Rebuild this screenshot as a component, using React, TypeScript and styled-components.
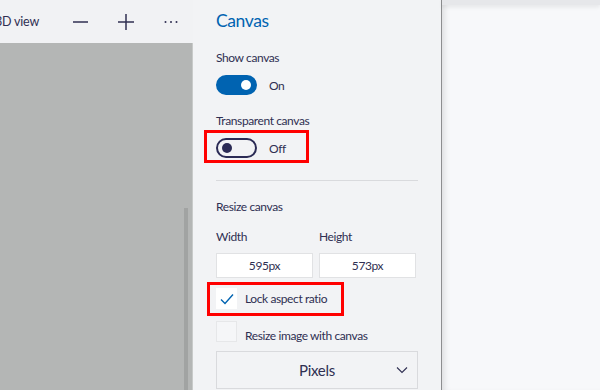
import React from "react";
import styled, { createGlobalStyle } from "styled-components";

const GlobalStyle = createGlobalStyle`
  html, body { margin: 0; padding: 0; background: #f7f8fa; }
  body { font-family: "Segoe UI", Lato, "Noto Sans", sans-serif; letter-spacing: -0.4px; }
  *, *::before, *::after { box-sizing: border-box; }
`;

const ink = "#2f2f52";

const Root = styled.div`
  display: flex;
  width: 600px;
  height: 390px;
  overflow: hidden;
`;

const LeftPane = styled.div`
  width: 193px;
  display: flex;
  flex-direction: column;
  overflow: hidden;
`;

const Toolbar = styled.div`
  height: 43px;
  background: #f1f2f4;
  display: flex;
  align-items: center;
  gap: 30px;
  color: ${ink};
`;

const ViewLabel = styled.span`
  font-size: 12.5px;
  letter-spacing: -0.2px;
  margin-left: -5px;
  width: 48px;
  flex: none;
  white-space: nowrap;
`;

const ToolIcon = styled.svg`
  flex: none;
  display: block;
`;

const CanvasArea = styled.div`
  flex: 1;
  background: #b4b6b5;
  position: relative;
  border-right: 1px solid #c8cac9;
`;

const ScrollThumb = styled.div`
  position: absolute;
  right: 4px;
  top: 165px;
  bottom: 0;
  width: 4px;
  background: #a1a3a2;
`;

const Panel = styled.div`
  width: 248px;
  background: #f2f3f5;
  padding: 10px 23px 0 23px;
  display: flex;
  flex-direction: column;
  color: ${ink};
`;

const Title = styled.h2`
  margin: 0;
  font-size: 17.5px;
  line-height: 22px;
  font-weight: 400;
  color: #0063b1;
`;

const Label = styled.div<{ $mt: number }>`
  margin-top: ${(p) => p.$mt}px;
  font-size: 12px;
  line-height: 16px;
  white-space: nowrap;
`;

const ToggleRow = styled.div<{ $mt: number; $marked?: boolean }>`
  position: relative;
  margin-top: ${(p) => p.$mt}px;
  display: flex;
  align-items: center;
  gap: 12px;
  height: 20px;
  font-size: 12px;
  ${(p) =>
    p.$marked
      ? `&::after {
    content: "";
    position: absolute;
    left: -12px;
    top: -8px;
    width: 105px;
    height: 33px;
    border: 3px solid #ff0000;
  }`
      : ""}
`;

const Switch = styled.div<{ $on: boolean }>`
  position: relative;
  width: 41px;
  height: 20px;
  border-radius: 10px;
  background: ${(p) => (p.$on ? "#0063b1" : "transparent")};
  border: 2px solid ${(p) => (p.$on ? "#0063b1" : "#2b2b55")};
  flex: none;
  &::after {
    content: "";
    position: absolute;
    top: 3px;
    ${(p) => (p.$on ? "right: 4px;" : "left: 4px;")}
    width: 10px;
    height: 10px;
    border-radius: 50%;
    background: ${(p) => (p.$on ? "#ffffff" : "#2b2b55")};
  }
`;

const Separator = styled.div`
  margin-top: 22px;
  height: 1px;
  background: #d9dadd;
`;

const FieldGrid = styled.div<{ $mt: number }>`
  margin-top: ${(p) => p.$mt}px;
  display: grid;
  grid-template-columns: 97px 97px;
  column-gap: 6px;
  font-size: 12px;
  line-height: 16px;
`;

const Input = styled.div`
  height: 25px;
  background: #ffffff;
  border: 1px solid #e1e2e4;
  display: flex;
  align-items: center;
  justify-content: center;
  font-size: 12px;
`;

const CheckRow = styled.div<{ $mt: number; $marked?: boolean }>`
  position: relative;
  margin-top: ${(p) => p.$mt}px;
  display: flex;
  align-items: center;
  gap: 8px;
  height: 21px;
  font-size: 12px;
  ${(p) =>
    p.$marked
      ? `&::after {
    content: "";
    position: absolute;
    left: -9px;
    top: -6px;
    width: 137px;
    height: 34px;
    border: 3px solid #ff0000;
  }`
      : ""}
`;

const CheckText = styled.span<{ $dy?: number }>`
  transform: translateY(${(p) => p.$dy ?? 0}px);
  white-space: nowrap;
`;

const CheckBox = styled.div<{ $white?: boolean }>`
  width: 21px;
  height: 21px;
  flex: none;
  background: ${(p) => (p.$white ? "#ffffff" : "#f5f6f8")};
  border: ${(p) => (p.$white ? "none" : "1px solid #e6e7e9")};
  display: flex;
  align-items: center;
  justify-content: center;
`;

const Dropdown = styled.div`
  margin-top: 9px;
  height: 38px;
  border: 1px solid #d9dadd;
  display: flex;
  align-items: center;
  justify-content: center;
  position: relative;
  font-size: 15px;
  letter-spacing: -0.3px;
`;

const Chevron = styled.svg`
  position: absolute;
  right: 9px;
  top: 14px;
`;

const RightPane = styled.div`
  flex: 1;
  background: #f7f8fa;
  border-left: 1px solid #8d8e90;
  box-shadow: inset 6px 0 6px -4px rgba(0, 0, 0, 0.12);
  position: relative;
`;

const TopStrip = styled.div`
  height: 5px;
  background: #e6e7ea;
  box-shadow: 0 2px 4px rgba(0, 0, 0, 0.08);
`;

export default function App() {
  return (
    <>
      <GlobalStyle />
      <Root>
        <LeftPane>
          <Toolbar>
            <ViewLabel>3D view</ViewLabel>
            <ToolIcon width="15" height="4" viewBox="0 0 15 4">
              <line x1="0" y1="2" x2="15" y2="2" stroke={ink} strokeWidth="1.5" />
            </ToolIcon>
            <ToolIcon width="16" height="16" viewBox="0 0 16 16">
              <line x1="0" y1="8" x2="16" y2="8" stroke={ink} strokeWidth="1.5" />
              <line x1="8" y1="0" x2="8" y2="16" stroke={ink} strokeWidth="1.5" />
            </ToolIcon>
            <ToolIcon width="14" height="4" viewBox="0 0 14 4">
              <circle cx="1.5" cy="2" r="1" fill={ink} />
              <circle cx="7" cy="2" r="1" fill={ink} />
              <circle cx="12.5" cy="2" r="1" fill={ink} />
            </ToolIcon>
          </Toolbar>
          <CanvasArea>
            <ScrollThumb />
          </CanvasArea>
        </LeftPane>

        <Panel>
          <Title>Canvas</Title>
          <Label $mt={18}>Show canvas</Label>
          <ToggleRow $mt={9}>
            <Switch $on={true} />
            <span>On</span>
          </ToggleRow>
          <Label $mt={18}>Transparent canvas</Label>
          <ToggleRow $mt={9} $marked>
            <Switch $on={false} />
            <span>Off</span>
          </ToggleRow>
          <Separator />
          <Label $mt={18}>Resize canvas</Label>
          <FieldGrid $mt={14}>
            <span>Width</span>
            <span>Height</span>
          </FieldGrid>
          <FieldGrid $mt={8}>
            <Input>595px</Input>
            <Input>573px</Input>
          </FieldGrid>
          <CheckRow $mt={10} $marked>
            <CheckBox $white>
              <svg width="14" height="12" viewBox="0 0 14 12">
                <polyline points="1,6.5 5,10.5 13,1.5" fill="none" stroke="#0063b1" strokeWidth="1.4" />
              </svg>
            </CheckBox>
            <CheckText>Lock aspect ratio</CheckText>
          </CheckRow>
          <CheckRow $mt={12}>
            <CheckBox />
            <CheckText $dy={4}>Resize image with canvas</CheckText>
          </CheckRow>
          <Dropdown>
            Pixels
            <Chevron width="12" height="8" viewBox="0 0 12 8">
              <polyline points="1,1.5 6,6.5 11,1.5" fill="none" stroke={ink} strokeWidth="1.1" />
            </Chevron>
          </Dropdown>
        </Panel>

        <RightPane>
          <TopStrip />
        </RightPane>
      </Root>
    </>
  );
}
